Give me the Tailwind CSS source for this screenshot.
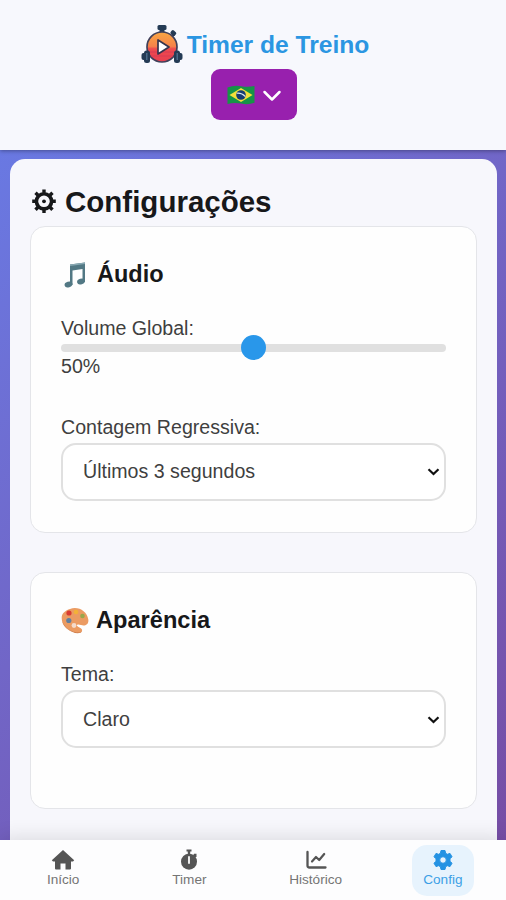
<!DOCTYPE html>
<html lang="pt-BR">
<head>
<meta charset="utf-8">
<title>Timer de Treino</title>
<script src="https://cdn.jsdelivr.net/npm/@tailwindcss/browser@4"></script>
</head>
<body class="h-[900px] w-[506px] overflow-hidden font-['Liberation_Sans',Arial,sans-serif] text-[19.6px] text-[#3f3f3f]">
<div class="flex h-[900px] flex-col bg-linear-135 from-[#667eea] to-[#764ba2]">
  <header class="relative z-10 flex h-[150px] shrink-0 flex-col items-center bg-[#f7f8fd] pl-[2px] pt-[22px] shadow-[0_1px_4px_rgba(0,0,0,0.35)]">
    <h1 class="flex h-[45px] items-center gap-[4px] pl-[2px] text-[24.6px] font-bold leading-none text-[#2b96e2]">
      <svg class="h-[40px] w-[42px]" viewBox="0 0 42 40">
        <defs><linearGradient id="dial" x1="0" y1="0" x2="0" y2="1"><stop offset="0" stop-color="#f9a743"/><stop offset=".48" stop-color="#f5824a"/><stop offset=".56" stop-color="#ee4b4e"/><stop offset="1" stop-color="#e83f50"/></linearGradient></defs>
        <g fill="#243b55">
          <rect x="16.500" y="0" width="9" height="5" rx="1.500"/><rect x="18.500" y="4" width="5" height="5"/>
          <rect x="29.500" y="5.500" width="5.500" height="4.500" rx="1.500" transform="rotate(42 32 8)"/>
          <path d="M29 11l3-3 2 2-3 3z"/>
        </g>
        <circle cx="21" cy="22" r="15" fill="url(#dial)" stroke="#40405a" stroke-width="1.700"/>
        <path d="M8 27h26M10 31h22" stroke="#d83a54" stroke-width="1"/>
        <path d="M17 15v14l11-7z" fill="#fff" stroke="#34344e" stroke-width="1.700" stroke-linejoin="round"/>
        <g fill="#243b55">
          <rect x=".5" y="28" width="5" height="7" rx="2"/><rect x="3" y="25.500" width="6" height="12.500" rx="2.500"/>
          <rect x="36.500" y="28" width="5" height="7" rx="2"/><rect x="33" y="25.500" width="6" height="12.500" rx="2.500"/>
        </g>
        <g fill="#4a6a88"><rect x="5" y="28" width="1.500" height="7"/><rect x="35.500" y="28" width="1.500" height="7"/></g>
      </svg>
      <span class="mt-[2px] whitespace-nowrap">Timer de Treino</span>
    </h1>
    <button class="mt-[2px] flex h-[51px] w-[86px] items-center gap-[7px] rounded-[9px] bg-[#9820ae] pl-[16px]">
      <svg class="h-[20px] w-[28px]" viewBox="0 0 28 20">
        <path d="M.5 2.500Q7 0 14 1.200T27.500 1V17.800Q21 20 14 18.600T.5 19z" fill="#169447"/>
        <path d="M14 3L25.500 10 14 17 2.500 10z" fill="#f4df3a"/>
        <circle cx="14" cy="10" r="4.800" fill="#173b72"/><path d="M9.700 8.200q5-.6 8.700 3.500" stroke="#dbe6ee" stroke-width="1.100" fill="none"/>
      </svg>
      <svg class="mt-[3px] h-[12px] w-[20px]" viewBox="0 0 20 12" fill="none" stroke="#fff" stroke-width="2.500" stroke-linecap="round" stroke-linejoin="round"><path d="M2.500 2l7.500 7.500L17.500 2"/></svg>
    </button>
  </header>

  <main class="mx-[10px] mt-[9px] flex h-[681px] w-[487px] shrink-0 flex-col rounded-t-[15px] bg-[#f7f7fc] px-[20px] pt-[25px]">
    <h2 class="flex h-[36px] items-center gap-[8px] text-[29.5px] font-bold leading-none text-[#17181a]">
      <svg class="h-[26px] w-[27px]" viewBox="-14 -12.300 27 26" fill="none" stroke="#17181a">
        <circle r="7.600" stroke-width="3.600"/><circle r="1.900" fill="#17181a" stroke="none"/>
        <path stroke-width="3.400" d="M0-8.500V-11.800M0 8.500V11.800M-8.500 0H-11.800M8.500 0H11.800M6-6l2.500-2.500M-6-6l-2.500-2.500M6 6l2.500 2.500M-6 6l-2.500 2.500"/>
      </svg><span>Configurações</span>
    </h2>
    <section class="mt-[6px] h-[307px] shrink-0 rounded-[15px] border border-[#e4e5e9] bg-[#fefefe] px-[30px] pt-[34px]">
      <h3 class="flex h-[28px] items-center gap-[8px] text-[23.5px] font-bold leading-none text-[#17181a]">
        <svg class="h-[28px] w-[28px]" viewBox="0 0 28 28">
          <path d="M9 3.500L24 1.500V21h-2.500V8L11.500 9.500V24H9z" fill="#527884"/><path d="M9 3.500L24 1.500V3L9 5z" fill="#89a9b3"/>
          <ellipse cx="7.500" cy="23.500" rx="4" ry="2.800" transform="rotate(-18 7.500 23.500)" fill="#527884"/>
          <ellipse cx="20" cy="20.500" rx="4" ry="2.800" transform="rotate(-18 20 20.500)" fill="#527884"/>
        </svg><span>Áudio</span>
      </h3>
      <label class="mt-[27px] block h-[24px] leading-[24px]">Volume Global:</label>
      <div class="mt-[1px] flex h-[13px] items-center">
        <div class="flex h-[8px] w-[385px] items-center justify-center rounded-full bg-[#e0e0e0]"><div class="size-[25px] shrink-0 rounded-full bg-[#2997ea]"></div></div>
      </div>
      <div class="h-[24px] leading-[24px]">50%</div>
      <label class="mt-[37px] block h-[24px] leading-[24px]">Contagem Regressiva:</label>
      <div class="mt-[4px] flex h-[58px] w-[385px] items-center justify-between rounded-[15px] border-2 border-[#e0e0e0] bg-white pb-[2px] pl-[20px] pr-[4px]">
        <span class="leading-[24px]">Últimos 3 segundos</span>
        <svg class="mt-[2px] h-[8px] w-[13px]" viewBox="0 0 13 8" fill="none" stroke="#111" stroke-width="2.200"><path d="M1.500 1.200l5 4.800 5-4.800"/></svg>
      </div>
    </section>
    <section class="mt-[39px] h-[237px] shrink-0 rounded-[15px] border border-[#e4e5e9] bg-[#fefefe] px-[30px] pt-[34px]">
      <h3 class="flex h-[28px] items-center gap-[7px] text-[23.6px] font-bold leading-none text-[#17181a]">
        <svg class="h-[28px] w-[28px]" viewBox="0 0 28 28">
          <path d="M9 2C17-1 26 4 27.300 12.500c.8 5-3.500 7-7.300 5.500-4-1.500-5.500.5-2.500 2 2.500 1.300 4 2 3.500 4-.8 2.500-6 2-9.500.5C5 22 .5 16.500.7 10.500.8 6 4.500 3.500 9 2z" fill="#eb9b62"/>
          <path d="M1 13.500c2 6 7 10 12 11.200 4 1 7 .8 8-.7-.5 2.500-5.500 3-9.500 1C5.500 22.500 1.500 18 1 13.500z" fill="#cf7b45"/>
          <circle cx="8" cy="6" r="2.600" fill="#d93b32"/><circle cx="15" cy="5" r="2.300" fill="#f3b137"/><circle cx="21.500" cy="9" r="2.300" fill="#98a64c"/><circle cx="7.800" cy="13.500" r="2.600" fill="#627f9e"/><circle cx="13" cy="18.500" r="2.400" fill="#f4dbcb"/>
        </svg><span>Aparência</span>
      </h3>
      <label class="mt-[27px] block h-[24px] leading-[24px]">Tema:</label>
      <div class="mt-[4px] flex h-[58px] w-[385px] items-center justify-between rounded-[15px] border-2 border-[#e0e0e0] bg-white pb-px pl-[20px] pr-[4px]">
        <span class="leading-[24px]">Claro</span>
        <svg class="mt-[2px] h-[8px] w-[13px]" viewBox="0 0 13 8" fill="none" stroke="#111" stroke-width="2.200"><path d="M1.500 1.200l5 4.800 5-4.800"/></svg>
      </div>
    </section>
  </main>

  <nav class="relative z-10 flex h-[60px] shrink-0 justify-around bg-[#fdfdfe] pt-[5px] text-[13.6px] leading-[16px] text-[#757575] shadow-[0_-2px_20px_rgba(0,0,0,0.12)]">
    <a class="flex h-[51px] w-[62px] flex-col items-center pt-[4px]">
      <svg class="h-[22px] w-[24px]" viewBox="0 0 24 22" fill="#555"><path d="M12 1L.8 11.200 2 12.500h2V19.500q0 1 1 1h4.500v-6h5v6H19q1 0 1-1v-7h2l1.200-1.300z"/></svg>
      <span class="mt-[1px]">Início</span>
    </a>
    <a class="flex h-[51px] w-[62px] flex-col items-center pt-[4px]">
      <svg class="h-[22px] w-[20px]" viewBox="0 0 20 22"><g fill="#555"><path d="M7.500 .500h5v2h-1.300V6H8.800V2.500H7.500z"/><path d="M14 6.500l1-1.700h2.500v2.400L16 9z"/><circle cx="10" cy="12.700" r="8"/></g><path d="M10 8v6" stroke="#fff" stroke-width="1.800" stroke-linecap="round"/></svg>
      <span class="mt-[1px]">Timer</span>
    </a>
    <a class="flex h-[51px] w-[62px] flex-col items-center pt-[4px]">
      <svg class="h-[22px] w-[22px]" viewBox="0 0 22 22" fill="none" stroke="#555" stroke-width="2.300" stroke-linecap="round" stroke-linejoin="round"><path d="M2.500 3v13.500q0 2 2 2H20.500"/><path d="M7 12.500l4-4.500 3.200 3 5-6" stroke-width="2.200"/></svg>
      <span class="mt-[1px]">Histórico</span>
    </a>
    <a class="ml-px flex h-[51px] w-[62px] flex-col items-center rounded-[15px] bg-[#e7f3fd] pt-[4px] text-[#3c9fe6]">
      <svg class="h-[22px] w-[22px]" viewBox="0 0 22 22"><path fill="#2492e3" stroke="#2492e3" stroke-width="1" stroke-linejoin="round" fill-rule="evenodd" d="M9 1.500h4l.6 2.800 1.800 1L18 4.400l2 3.400-2 2v2.400l2 2-2 3.400-2.600-.9-1.800 1-.6 2.800H9l-.6-2.800-1.800-1-2.600.9-2-3.400 2-2V9.800l-2-2 2-3.400 2.600.9 1.800-1zM11 7.700a3.300 3.300 0 1 0 0 6.600 3.300 3.300 0 1 0 0-6.600z"/></svg>
      <span class="mt-[1px]">Config</span>
    </a>
  </nav>
</div>
</body>
</html>
